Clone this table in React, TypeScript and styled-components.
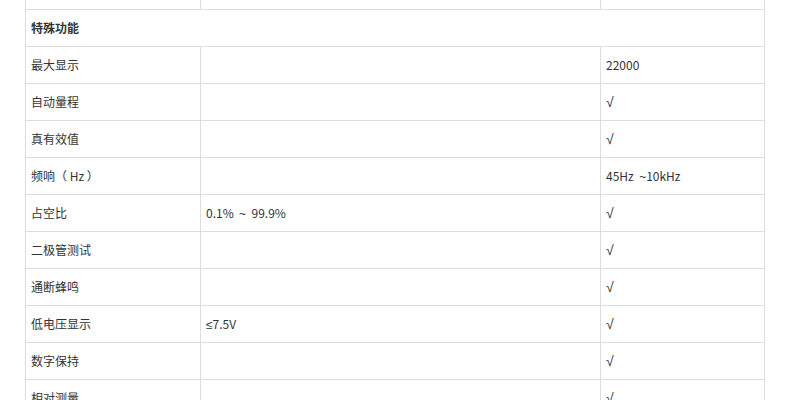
import React from "react";
import styled, { createGlobalStyle } from "styled-components";

const GlobalStyle = createGlobalStyle`
  html, body {
    margin: 0;
    padding: 0;
    background: #fff;
    overflow: hidden;
  }
  body {
    font-family: "Noto Sans CJK SC", "Noto Sans", sans-serif;
    color: #333;
  }
`;

const Page = styled.div`
  width: 790px;
  height: 400px;
  overflow: hidden;
  padding-left: 25px;
  box-sizing: border-box;
`;

const Table = styled.table`
  border-collapse: collapse;
  table-layout: fixed;
  width: 739px;
  margin-top: -28px;
  font-size: 12px;
  line-height: 16px;
`;

const Cell = styled.td<{ $bold?: boolean }>`
  border: 1px solid #ddd;
  height: 37px;
  padding: 0 5px;
  box-sizing: border-box;
  vertical-align: middle;
  white-space: pre;
  font-weight: ${(p) => (p.$bold ? 700 : 400)};
  color: #333;
`;

const Sym = styled.span<{ $size?: number }>`
  font-family: "Liberation Sans", sans-serif;
  font-size: ${(p) => p.$size ?? 12}px;
`;

type Row = [string, React.ReactNode, React.ReactNode];

const check = <Sym $size={14}>√</Sym>;

const rows: Row[] = [
  ["最大显示", "", "22000"],
  ["自动量程", "", check],
  ["真有效值", "", check],
  ["频响（ Hz ）", "", <>45Hz  <Sym>~</Sym>10kHz</>],
  ["占空比", <>0.1%  <Sym>~</Sym>  99.9%</>, check],
  ["二极管测试", "", check],
  ["通断蜂鸣", "", check],
  ["低电压显示", <><Sym>≤</Sym>7.5V</>, check],
  ["数字保持", "", check],
  ["相对测量", "", check],
];

export default function App() {
  return (
    <Page>
      <GlobalStyle />
      <Table>
        <colgroup>
          <col style={{ width: 175 }} />
          <col style={{ width: 400 }} />
          <col style={{ width: 164 }} />
        </colgroup>
        <tbody>
          <tr>
            <Cell />
            <Cell />
            <Cell />
          </tr>
          <tr>
            <Cell colSpan={3} $bold>
              特殊功能
            </Cell>
          </tr>
          {rows.map(([name, range, value]) => (
            <tr key={name}>
              <Cell>{name}</Cell>
              <Cell>{range}</Cell>
              <Cell>{value}</Cell>
            </tr>
          ))}
        </tbody>
      </Table>
    </Page>
  );
}
